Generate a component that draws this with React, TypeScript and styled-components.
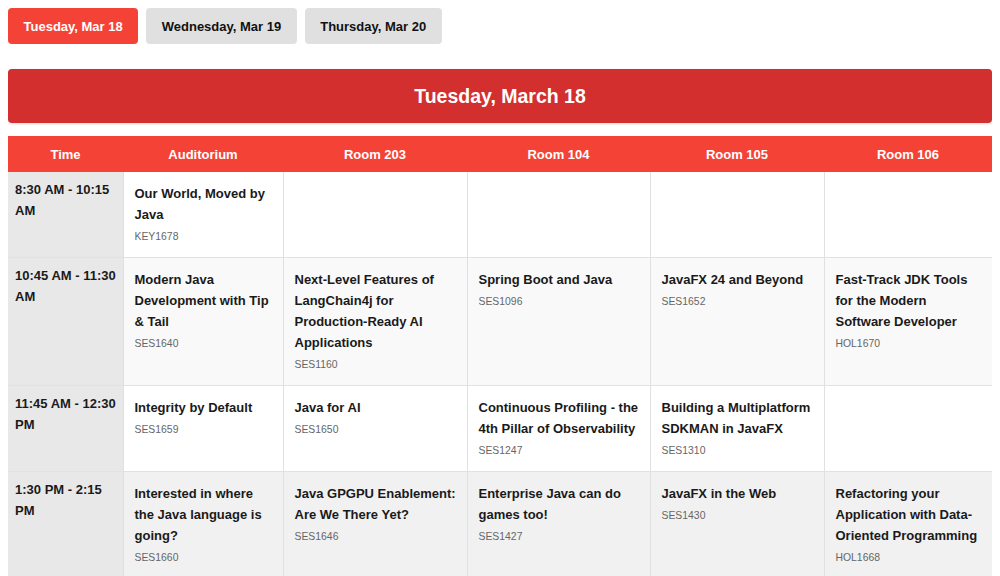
import React, { useState } from 'react';
import styled, { createGlobalStyle } from 'styled-components';

const GlobalStyle = createGlobalStyle`
  body {
    margin: 8px;
    background: #ffffff;
    font-family: "Liberation Sans", Arial, Helvetica, sans-serif;
    color: #222;
  }
`;

const Tabs = styled.div`
  display: flex;
  gap: 8px;
  margin-bottom: 25px;
`;

const Tab = styled.button<{ $active?: boolean }>`
  height: 36px;
  padding: 0 15.5px;
  border: none;
  border-radius: 4px;
  font-family: inherit;
  font-size: 13px;
  font-weight: bold;
  cursor: pointer;
  background-color: ${({ $active }) => ($active ? '#f44336' : '#e0e0e0')};
  color: ${({ $active }) => ($active ? '#ffffff' : '#111111')};
`;

const DayHeader = styled.h2`
  margin: 0 0 13px;
  height: 54px;
  display: flex;
  align-items: center;
  justify-content: center;
  background-color: #d32f2f;
  color: #ffffff;
  border-radius: 4px;
  font-size: 19.5px;
  font-weight: bold;
  box-shadow: 0 1px 3px rgba(0, 0, 0, 0.15);
`;

const Table = styled.table`
  width: 100%;
  border-collapse: collapse;
  table-layout: fixed;
  font-size: 13px;
`;

const HeadCell = styled.th`
  height: 36px;
  padding: 0 8px;
  background-color: #f44336;
  color: #ffffff;
  font-weight: bold;
  text-align: center;
`;

const Row = styled.tr<{ $shade: string }>`
  background-color: ${({ $shade }) => $shade};
`;

const TimeCell = styled.td`
  vertical-align: top;
  padding: 7px 3px 7px 7px;
  background-color: #e8e8e8;
  font-weight: bold;
  line-height: 21px;
  color: #1a1a1a;
  border-bottom: 1px solid #e2e2e2;
`;

const SlotCell = styled.td`
  vertical-align: top;
  padding: 11px 9px 12px 11px;
  border-left: 1px solid #e0e0e0;
  border-bottom: 1px solid #e2e2e2;
`;

const Title = styled.div`
  font-weight: bold;
  line-height: 21px;
  color: #1a1a1a;
`;

const Code = styled.div`
  margin-top: 4px;
  font-size: 10.4px;
  line-height: 16px;
  color: #666666;
`;

type Session = { title: string; code: string } | null;

const rooms = ['Auditorium', 'Room 203', 'Room 104', 'Room 105', 'Room 106'];
const widths = [115, 160, 184, 183, 174, 168];

const schedule: { time: string; sessions: Session[] }[] = [
  {
    time: '8:30 AM - 10:15 AM',
    sessions: [{ title: 'Our World, Moved by Java', code: 'KEY1678' }, null, null, null, null],
  },
  {
    time: '10:45 AM - 11:30 AM',
    sessions: [
      { title: 'Modern Java Development with Tip & Tail', code: 'SES1640' },
      { title: 'Next-Level Features of LangChain4j for Production-Ready AI Applications', code: 'SES1160' },
      { title: 'Spring Boot and Java', code: 'SES1096' },
      { title: 'JavaFX 24 and Beyond', code: 'SES1652' },
      { title: 'Fast-Track JDK Tools for the Modern Software Developer', code: 'HOL1670' },
    ],
  },
  {
    time: '11:45 AM - 12:30 PM',
    sessions: [
      { title: 'Integrity by Default', code: 'SES1659' },
      { title: 'Java for AI', code: 'SES1650' },
      { title: 'Continuous Profiling - the 4th Pillar of Observability', code: 'SES1247' },
      { title: 'Building a Multiplatform SDKMAN in JavaFX', code: 'SES1310' },
      null,
    ],
  },
  {
    time: '1:30 PM - 2:15 PM',
    sessions: [
      { title: 'Interested in where the Java language is going?', code: 'SES1660' },
      { title: 'Java GPGPU Enablement: Are We There Yet?', code: 'SES1646' },
      { title: 'Enterprise Java can do games too!', code: 'SES1427' },
      { title: 'JavaFX in the Web', code: 'SES1430' },
      { title: 'Refactoring your Application with Data-Oriented Programming', code: 'HOL1668' },
    ],
  },
];

const days = [
  { short: 'Tuesday, Mar 18', long: 'Tuesday, March 18' },
  { short: 'Wednesday, Mar 19', long: 'Wednesday, March 19' },
  { short: 'Thursday, Mar 20', long: 'Thursday, March 20' },
];

const shades = ['#ffffff', '#f9f9f9', '#ffffff', '#f1f1f1'];

const App: React.FC = () => {
  const [day, setDay] = useState(0);

  return (
    <>
      <GlobalStyle />
      <Tabs>
        {days.map((d, i) => (
          <Tab key={d.short} $active={i === day} onClick={() => setDay(i)}>
            {d.short}
          </Tab>
        ))}
      </Tabs>
      <DayHeader>{days[day].long}</DayHeader>
      <Table>
        <colgroup>
          {widths.map((w, i) => (
            <col key={i} style={{ width: w }} />
          ))}
        </colgroup>
        <thead>
          <tr>
            <HeadCell>Time</HeadCell>
            {rooms.map(r => (
              <HeadCell key={r}>{r}</HeadCell>
            ))}
          </tr>
        </thead>
        <tbody>
          {schedule.map((slot, i) => (
            <Row key={slot.time} $shade={shades[i]}>
              <TimeCell>{slot.time}</TimeCell>
              {slot.sessions.map((s, j) => (
                <SlotCell key={j}>
                  {s && (
                    <>
                      <Title>{s.title}</Title>
                      <Code>{s.code}</Code>
                    </>
                  )}
                </SlotCell>
              ))}
            </Row>
          ))}
        </tbody>
      </Table>
    </>
  );
};

export default App;
